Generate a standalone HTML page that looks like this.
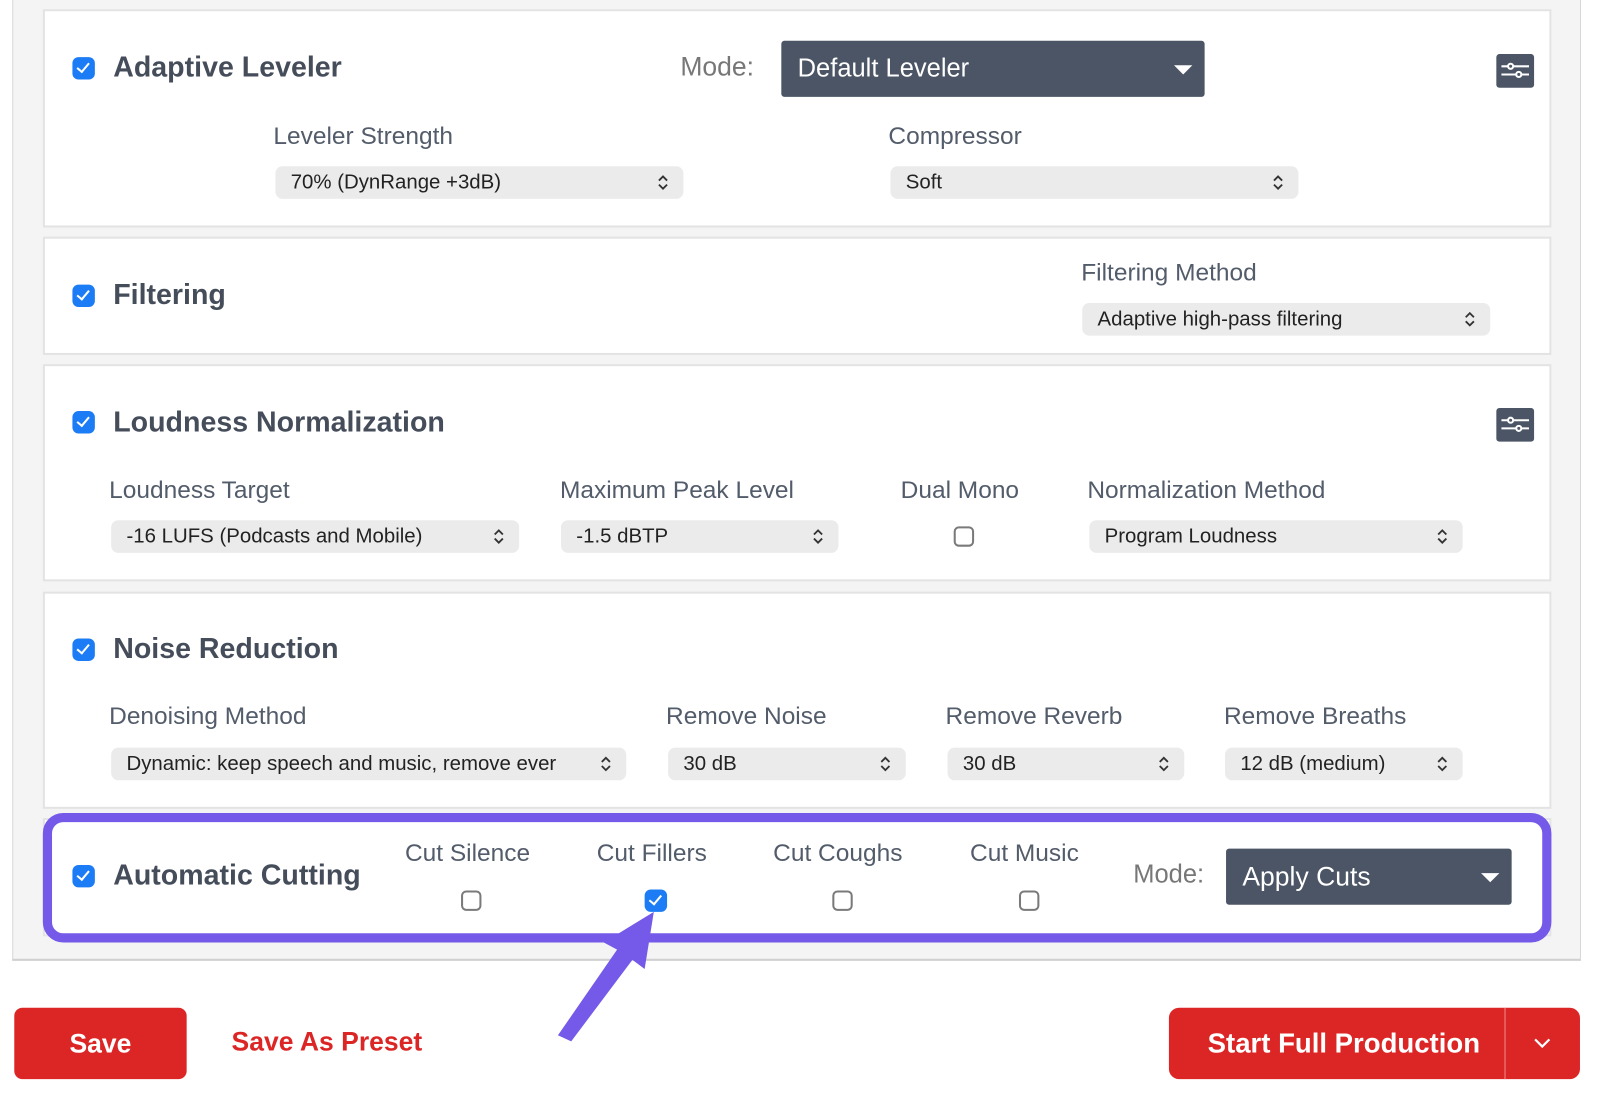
<!DOCTYPE html>
<html><head><meta charset="utf-8"><style>
*{box-sizing:border-box;margin:0;padding:0}
body{width:1598px;height:1086px;background:#fff;font-family:"Liberation Sans",sans-serif;position:relative;overflow:hidden;color:#4a5260}
#w{position:absolute;left:0;top:0;width:1598px;height:1086px;transform:scale(1.02);transform-origin:0 0}
.a{position:absolute}
.outer{left:12px;top:-2px;width:1538px;height:944px;background:#f4f4f4;border:1px solid #d8d8d8;border-bottom:2px solid #d0d0d0}
.panel{position:absolute;left:42px;width:1479px;background:#fff;border:2px solid #e3e3e3}
.cb{position:absolute;width:22px;height:22px;border-radius:6px;background:#1b7cf5}
.cb::after{content:"";position:absolute;left:7px;top:3px;width:5px;height:10px;border:solid #fff;border-width:0 2.5px 2.5px 0;transform:rotate(40deg)}
.ucb{position:absolute;width:20px;height:20px;border-radius:5px;border:2px solid #7a7a7a;background:#fff}
.title{position:absolute;font-size:28px;font-weight:bold;color:#454d5a}
.lbl{position:absolute;font-size:24px;color:#535c6a}
.sel{position:absolute;height:32px;background:#ebebeb;border-radius:7px;font-size:20px;color:#222;padding-left:15px;line-height:32px;white-space:nowrap;overflow:hidden}
.sel svg{position:absolute;right:14px;top:8px}
.dd{position:absolute;background:#4b5565;border-radius:3px;color:#fff;font-size:25px;padding-left:16px}
.dd::after{content:"";position:absolute;right:12px;top:50%;margin-top:-4px;border-left:9px solid transparent;border-right:9px solid transparent;border-top:9px solid #fff}
.ic{position:absolute;width:37px;height:33px;background:#4b5565;border-radius:3px}
.mode{position:absolute;font-size:26px;color:#777}
</style></head><body><div id="w">
<div class="a outer"></div>

<div class="panel" style="top:9px;height:214px"></div>
<div class="cb" style="left:71px;top:56px"></div>
<div class="title" style="left:111px;top:50px">Adaptive Leveler</div>
<div class="mode" style="left:667px;top:50px">Mode:</div>
<div class="dd" style="left:766px;top:40px;width:415px;height:55px;line-height:55px">Default Leveler</div>
<div class="ic" style="left:1467px;top:53px"><svg width="37" height="33"><g stroke="#fff" stroke-width="2" fill="#4b5565"><line x1="5" y1="12" x2="32" y2="12"/><line x1="5" y1="20" x2="32" y2="20"/><circle cx="14" cy="12" r="2.5"/><circle cx="22" cy="20" r="2.5"/></g></svg></div>
<div class="lbl" style="left:268px;top:120px">Leveler Strength</div>
<div class="sel" style="left:270px;top:163px;width:400px">70% (DynRange +3dB)<svg width="12" height="16"><path d="M2 6l4-4 4 4M2 10l4 4 4-4" stroke="#333" stroke-width="1.8" fill="none"/></svg></div>
<div class="lbl" style="left:871px;top:120px">Compressor</div>
<div class="sel" style="left:873px;top:163px;width:400px">Soft<svg width="12" height="16"><path d="M2 6l4-4 4 4M2 10l4 4 4-4" stroke="#333" stroke-width="1.8" fill="none"/></svg></div>

<div class="panel" style="top:232px;height:116px"></div>
<div class="cb" style="left:71px;top:279px"></div>
<div class="title" style="left:111px;top:273px">Filtering</div>
<div class="lbl" style="left:1060px;top:254px">Filtering Method</div>
<div class="sel" style="left:1061px;top:297px;width:400px">Adaptive high-pass filtering<svg width="12" height="16"><path d="M2 6l4-4 4 4M2 10l4 4 4-4" stroke="#333" stroke-width="1.8" fill="none"/></svg></div>

<div class="panel" style="top:357px;height:213px"></div>
<div class="cb" style="left:71px;top:403px"></div>
<div class="title" style="left:111px;top:398px">Loudness Normalization</div>
<div class="ic" style="left:1467px;top:400px"><svg width="37" height="33"><g stroke="#fff" stroke-width="2" fill="#4b5565"><line x1="5" y1="12" x2="32" y2="12"/><line x1="5" y1="20" x2="32" y2="20"/><circle cx="14" cy="12" r="2.5"/><circle cx="22" cy="20" r="2.5"/></g></svg></div>
<div class="lbl" style="left:107px;top:467px">Loudness Target</div>
<div class="sel" style="left:109px;top:510px;width:400px">-16 LUFS (Podcasts and Mobile)<svg width="12" height="16"><path d="M2 6l4-4 4 4M2 10l4 4 4-4" stroke="#333" stroke-width="1.8" fill="none"/></svg></div>
<div class="lbl" style="left:549px;top:467px">Maximum Peak Level</div>
<div class="sel" style="left:550px;top:510px;width:272px">-1.5 dBTP<svg width="12" height="16"><path d="M2 6l4-4 4 4M2 10l4 4 4-4" stroke="#333" stroke-width="1.8" fill="none"/></svg></div>
<div class="lbl" style="left:883px;top:467px">Dual Mono</div>
<div class="ucb" style="left:935px;top:516px"></div>
<div class="lbl" style="left:1066px;top:467px">Normalization Method</div>
<div class="sel" style="left:1068px;top:510px;width:366px">Program Loudness<svg width="12" height="16"><path d="M2 6l4-4 4 4M2 10l4 4 4-4" stroke="#333" stroke-width="1.8" fill="none"/></svg></div>

<div class="panel" style="top:580px;height:213px"></div>
<div class="cb" style="left:71px;top:626px"></div>
<div class="title" style="left:111px;top:620px">Noise Reduction</div>
<div class="lbl" style="left:107px;top:689px">Denoising Method</div>
<div class="sel" style="left:109px;top:733px;width:505px;padding-right:40px">Dynamic: keep speech and music, remove ever<svg width="12" height="16"><path d="M2 6l4-4 4 4M2 10l4 4 4-4" stroke="#333" stroke-width="1.8" fill="none"/></svg></div>
<div class="lbl" style="left:653px;top:689px">Remove Noise</div>
<div class="sel" style="left:655px;top:733px;width:233px">30 dB<svg width="12" height="16"><path d="M2 6l4-4 4 4M2 10l4 4 4-4" stroke="#333" stroke-width="1.8" fill="none"/></svg></div>
<div class="lbl" style="left:927px;top:689px">Remove Reverb</div>
<div class="sel" style="left:929px;top:733px;width:232px">30 dB<svg width="12" height="16"><path d="M2 6l4-4 4 4M2 10l4 4 4-4" stroke="#333" stroke-width="1.8" fill="none"/></svg></div>
<div class="lbl" style="left:1200px;top:689px">Remove Breaths</div>
<div class="sel" style="left:1201px;top:733px;width:233px">12 dB (medium)<svg width="12" height="16"><path d="M2 6l4-4 4 4M2 10l4 4 4-4" stroke="#333" stroke-width="1.8" fill="none"/></svg></div>

<div class="panel" style="top:802px;height:116px"></div>
<div class="a" style="left:42px;top:797px;width:1479px;height:127px;border:9px solid #7559e8;border-radius:20px"></div>
<div class="cb" style="left:71px;top:848px"></div>
<div class="title" style="left:111px;top:842px">Automatic Cutting</div>
<div class="lbl" style="left:397px;top:823px">Cut Silence</div>
<div class="ucb" style="left:452px;top:873px"></div>
<div class="lbl" style="left:585px;top:823px">Cut Fillers</div>
<div class="cb" style="left:632px;top:872px"></div>
<div class="lbl" style="left:758px;top:823px">Cut Coughs</div>
<div class="ucb" style="left:816px;top:873px"></div>
<div class="lbl" style="left:951px;top:823px">Cut Music</div>
<div class="ucb" style="left:999px;top:873px"></div>
<div class="mode" style="left:1111px;top:843px;font-size:25px">Mode:</div>
<div class="dd" style="left:1202px;top:832px;width:280px;height:55px;line-height:55px;font-size:26px">Apply Cuts</div>

<svg class="a" style="left:0;top:0" width="1598" height="1086"><polygon points="641,894 632,950 620,941 560,1021 547,1015 605,931 592,924" fill="#7559e8"/></svg>

<div class="a" style="left:14px;top:988px;width:169px;height:70px;background:#dc2626;border-radius:8px;color:#fff;font-weight:bold;font-size:26px;text-align:center;line-height:70px">Save</div>
<div class="a" style="left:227px;top:1006px;color:#dc2626;font-weight:bold;font-size:26px">Save As Preset</div>
<div class="a" style="left:1146px;top:988px;width:403px;height:70px;background:#dc2626;border-radius:10px;color:#fff;font-weight:bold;font-size:27px;line-height:70px">
<span style="position:absolute;left:38px">Start Full Production</span>
<div style="position:absolute;left:329px;top:0;width:1px;height:70px;background:#f08a8a"></div>
<svg style="position:absolute;left:357px;top:29px" width="18" height="12"><path d="M2 2l7 7 7-7" stroke="#fff" stroke-width="2.2" fill="none"/></svg>
</div>
</div></body></html>
